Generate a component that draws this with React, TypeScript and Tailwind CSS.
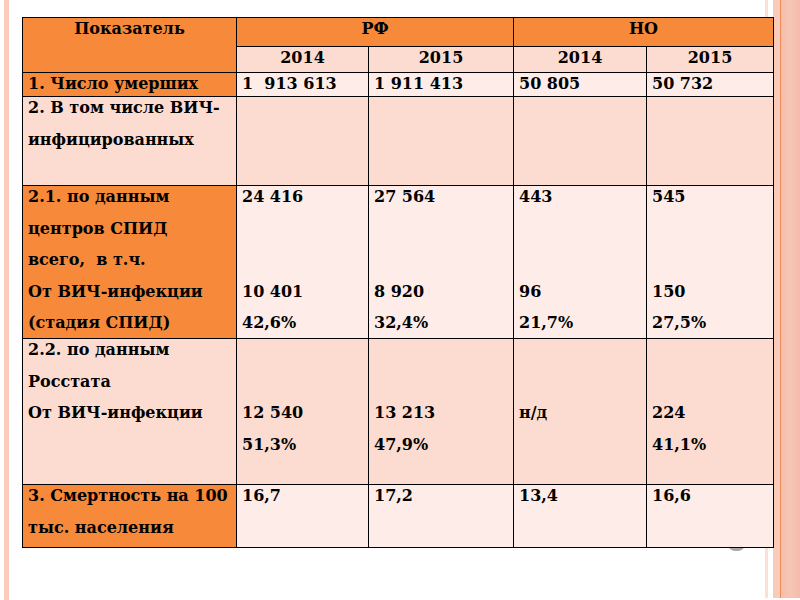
import React from "react";

const OR = "bg-[#f7893b]";
const PK = "bg-[#fcdcd1]";
const LT = "bg-[#fdece8]";

function Cell({
  lines,
  cls,
  center,
  colSpan,
  rowSpan,
}: {
  lines: string[];
  cls: string;
  center?: boolean;
  colSpan?: number;
  rowSpan?: number;
}) {
  return (
    <td
      colSpan={colSpan}
      rowSpan={rowSpan}
      className={`${cls} border border-black align-top p-0 ${center ? "text-center" : "pl-[5px]"}`}
    >
      <div className="h-0">
        <div className="leading-[31.6px] -mt-[5px] whitespace-pre">
          {lines.map((l, i) => (
            <div key={i}>{l === "" ? "\u00a0" : l}</div>
          ))}
        </div>
      </div>
    </td>
  );
}

export default function App() {
  return (
    <div className="relative w-[800px] h-[600px] bg-white overflow-hidden font-['DejaVu_Serif',serif] font-bold text-[16px] text-black">
      {/* left decorative bar */}
      <div className="absolute left-[4px] top-0 w-[5px] h-[600px] bg-[#fbcbbb]" />
      {/* right decorative bars */}
      <div className="absolute left-[765px] top-0 w-[3px] h-[598px] bg-[#fbe0d6]" />
      <div className="absolute left-[773px] top-0 w-[7px] h-[598px] bg-[#f9cbbb]" />
      <div className="absolute left-[780px] top-0 w-[1px] h-[598px] bg-[#f08a56]" />
      <div className="absolute left-[781px] top-0 w-[19px] h-[598px] bg-gradient-to-r from-[#f4bfac] via-[#f6c6b4] to-[#f3bca8]" />
      {/* hidden gray shape under the table */}
      <div className="absolute left-[728px] top-[544px] w-[17px] h-[7px] rounded-b-full bg-[#a8a8a8]" />

      <div className="relative pt-[17px] pl-[22px]">
        <table className="table-fixed border-collapse w-[751px]">
          <colgroup>
            <col className="w-[214px]" />
            <col className="w-[132px]" />
            <col className="w-[145px]" />
            <col className="w-[133px]" />
            <col className="w-[127px]" />
          </colgroup>
          <tbody>
            <tr className="h-[29px]">
              <Cell lines={["Показатель"]} cls={OR} center rowSpan={2} />
              <Cell lines={["РФ"]} cls={OR} center colSpan={2} />
              <Cell lines={["НО"]} cls={OR} center colSpan={2} />
            </tr>
            <tr className="h-[26px]">
              <Cell lines={["2014"]} cls={PK} center />
              <Cell lines={["2015"]} cls={PK} center />
              <Cell lines={["2014"]} cls={PK} center />
              <Cell lines={["2015"]} cls={PK} center />
            </tr>
            <tr className="h-[24px]">
              <Cell lines={["1. Число умерших"]} cls={OR} />
              <Cell lines={["1  913 613"]} cls={LT} />
              <Cell lines={["1 911 413"]} cls={LT} />
              <Cell lines={["50 805"]} cls={LT} />
              <Cell lines={["50 732"]} cls={LT} />
            </tr>
            <tr className="h-[89px]">
              <Cell lines={["2. В том числе ВИЧ-", "инфицированных"]} cls={PK} />
              <Cell lines={[""]} cls={PK} />
              <Cell lines={[""]} cls={PK} />
              <Cell lines={[""]} cls={PK} />
              <Cell lines={[""]} cls={PK} />
            </tr>
            <tr className="h-[153px]">
              <Cell
                lines={[
                  "2.1. по данным",
                  "центров СПИД",
                  "всего,  в т.ч.",
                  "От ВИЧ-инфекции",
                  "(стадия СПИД)",
                ]}
                cls={OR}
              />
              <Cell lines={["24 416", "", "", "10 401", "42,6%"]} cls={LT} />
              <Cell lines={["27 564", "", "", "8 920", "32,4%"]} cls={LT} />
              <Cell lines={["443", "", "", "96", "21,7%"]} cls={LT} />
              <Cell lines={["545", "", "", "150", "27,5%"]} cls={LT} />
            </tr>
            <tr className="h-[146px]">
              <Cell lines={["2.2. по данным", "Росстата", "От ВИЧ-инфекции"]} cls={PK} />
              <Cell lines={["", "", "12 540", "51,3%"]} cls={PK} />
              <Cell lines={["", "", "13 213", "47,9%"]} cls={PK} />
              <Cell lines={["", "", "н/д"]} cls={PK} />
              <Cell lines={["", "", "224", "41,1%"]} cls={PK} />
            </tr>
            <tr className="h-[63px]">
              <Cell lines={["3. Смертность на 100", "тыс. населения"]} cls={OR} />
              <Cell lines={["16,7"]} cls={LT} />
              <Cell lines={["17,2"]} cls={LT} />
              <Cell lines={["13,4"]} cls={LT} />
              <Cell lines={["16,6"]} cls={LT} />
            </tr>
          </tbody>
        </table>
      </div>
    </div>
  );
}
